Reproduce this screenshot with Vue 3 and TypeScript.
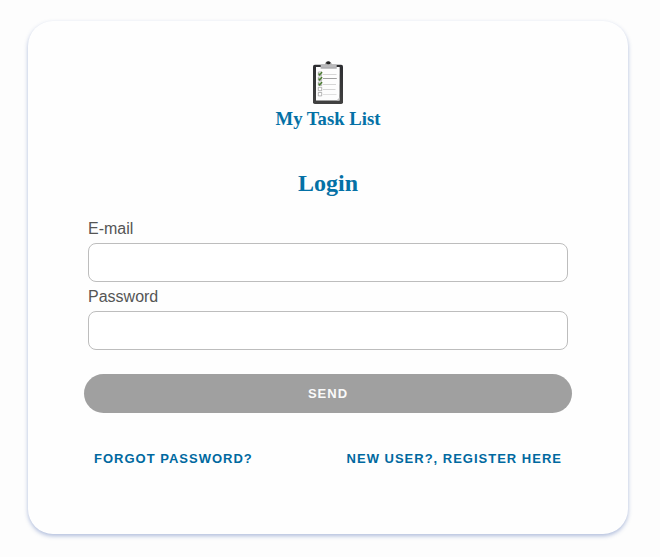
<script setup lang="ts">
import { ref } from 'vue'

const email = ref<string>('')
const password = ref<string>('')
</script>

<template>
  <main class="page">
    <section class="card">
      <header class="brand">
        <svg class="logo" viewBox="0 0 30 43" aria-hidden="true">
          <defs>
            <linearGradient id="board" x1="0" y1="0" x2="0" y2="1">
              <stop offset="0" stop-color="#2d2e31" />
              <stop offset="1" stop-color="#414141" />
            </linearGradient>
          </defs>
          <rect x="0" y="3.8" width="30" height="39.2" rx="1.8" fill="url(#board)" />
          <path d="M3 6h23.7l-.2 33.5H3z" fill="#fdfdfd" />
          <path d="M23.5 39.5l3-3v3z" fill="#c4c4c4" />
          <path d="M7.7 7.4V4.6q0-1.4 1.6-1.4h12.8q1.6 0 1.6 1.4v2.8z" fill="#bababc" />
          <path d="M7.7 7h16" stroke="#a2a2a4" stroke-width=".8" />
          <path d="M11.8 3.6Q12 .4 15.3.4t3.5 3.2z" fill="#a8a8a8" />
          <ellipse cx="15.3" cy="1.8" rx="2.2" ry="1.5" fill="#232323" />
          <g fill="#fff" stroke="#858585" stroke-width=".6">
            <path d="M5.3 11h3.4v3.4H5.3zM5.3 16h3.4v3.4H5.3zM5.3 21h3.4v3.4H5.3zM5.3 26.3h3.4v3.4H5.3zM5.3 31.5h3.4v3.4H5.3z" />
          </g>
          <path d="M5.6 12.5l1.1 1.5L9 11M5.6 17.5l1.1 1.5L9 16M5.6 22.5l1.1 1.5L9 21" fill="none" stroke="#467a2b" stroke-width="1.3" />
          <path d="M10 13.5h13.5M10 23.5h13M10 28.5h12.5" stroke="#cbcbcb" stroke-width=".8" />
          <path d="M10 17.5h13.8" stroke="#969696" stroke-width=".9" />
          <path d="M10 33.5h13.5" stroke="#d8d8d8" stroke-width=".8" />
        </svg>
        <h3 class="name">My Task List</h3>
      </header>
      <h2 class="heading">Login</h2>
      <form class="form" @submit.prevent>
        <label class="label" for="email">E-mail</label>
        <input id="email" v-model="email" class="input" type="email" />
        <label class="label" for="password">Password</label>
        <input id="password" v-model="password" class="input" type="password" />
        <button class="send" type="submit" disabled>SEND</button>
      </form>
      <nav class="links">
        <a class="link">FORGOT PASSWORD?</a>
        <a class="link">NEW USER?, REGISTER HERE</a>
      </nav>
    </section>
  </main>
</template>

<style>
body {
  background: #fdfdfd;
}
</style>

<style scoped>
.page {
  box-sizing: border-box;
  height: 557px;
  padding: 21px 32px 23px 28px;
  font-family: "Liberation Sans", Arial, sans-serif;
}
.card {
  box-sizing: border-box;
  height: 513px;
  padding: 40px 56px 0;
  border-radius: 25px;
  background: #fefefe;
  box-shadow: 0 2px 4px rgba(50, 85, 165, 0.38);
}
.brand {
  display: flex;
  flex-direction: column;
  align-items: center;
}
.logo {
  display: block;
  width: 30px;
  height: 43px;
}
.name,
.heading {
  margin: 0;
  color: #0471a6;
  font-family: "Liberation Serif", "Times New Roman", serif;
  font-weight: bold;
  text-align: center;
}
.name {
  margin-top: 4px;
  font-size: 18.72px;
  line-height: 21px;
}
.heading {
  margin-top: 41px;
  font-size: 24px;
  line-height: 27px;
}
.form {
  display: flex;
  flex-direction: column;
  margin-top: 23px;
}
.label {
  margin: 0 4px 5px;
  color: #555;
  font-size: 16px;
  line-height: 18px;
}
.input {
  box-sizing: border-box;
  height: 39px;
  margin: 0 4px 6px;
  padding: 0 10px;
  border: 1px solid #bdbdbd;
  border-radius: 8px;
  outline: none;
  background: #fff;
  font-size: 16px;
}
.send {
  height: 39px;
  margin: 18px 0 0;
  padding: 0;
  border: 0;
  border-radius: 20px;
  background: #a0a0a0;
  color: #fafafa;
  font-family: inherit;
  font-size: 13px;
  font-weight: bold;
  letter-spacing: 1px;
}
.links {
  display: flex;
  justify-content: space-between;
  margin-top: 38px;
  padding: 0 10px;
}
.link {
  color: #0069a0;
  font-size: 13px;
  font-weight: bold;
  line-height: 15px;
  letter-spacing: 1px;
}
</style>
